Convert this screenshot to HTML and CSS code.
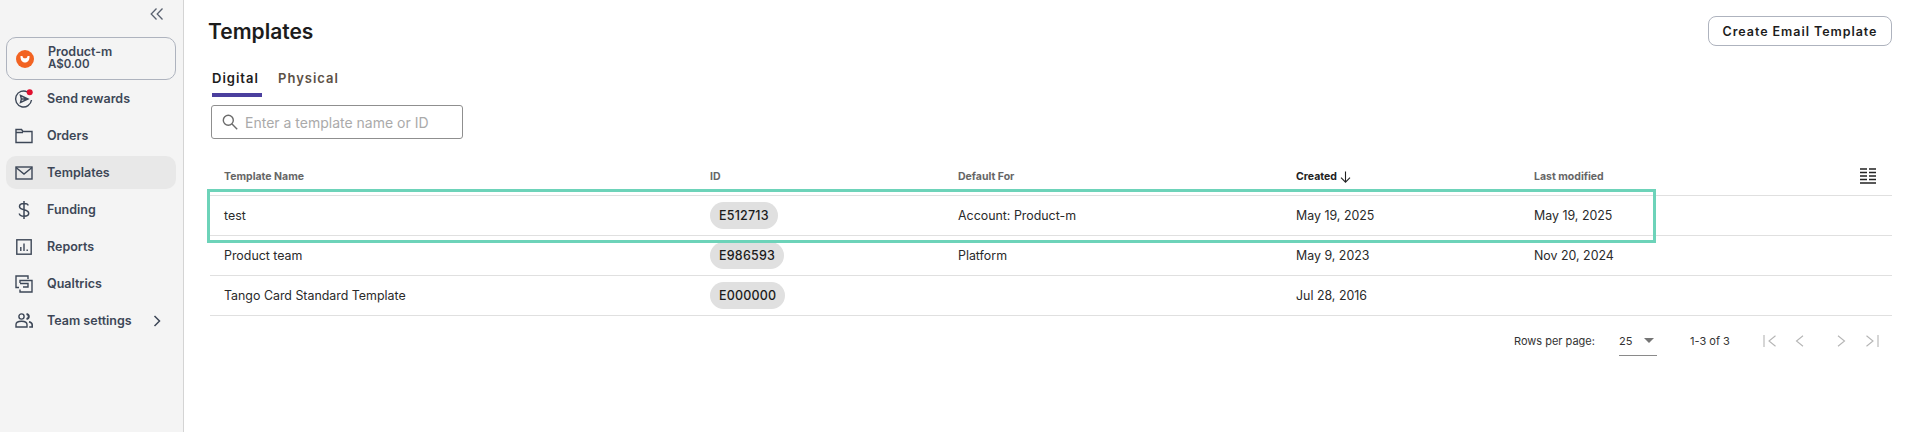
FILE: index.html
```html
<!DOCTYPE html>
<html lang="en">
<head>
<meta charset="utf-8">
<title>Templates</title>
<link rel="stylesheet" href="styles.css">
</head>
<body>
<div class="app">
  <aside class="sidebar">
    <div class="collapse">
      <svg width="14" height="14" viewBox="0 0 14 14" fill="none" stroke="#5a6270" stroke-width="1.3"><path d="M6.5 1.5 1.2 7l5.3 5.5M12.5 1.5 7.2 7l5.3 5.5"/></svg>
    </div>
    <div class="account">
      <svg class="account-logo" width="18" height="18" viewBox="0 0 18 18"><circle cx="9" cy="9" r="9" fill="#f26322"/><path d="M4.5 6h9c.3 3.6-1.6 6.6-4.5 6.6S4.200 9.600 4.500 6Z" fill="#fff"/><path d="M6.500 6h5c0 1.400-1 2.300-2.500 2.300S6.500 7.400 6.500 6Z" fill="#f26322"/></svg>
      <div class="account-text">
        <div>Product-m</div>
        <div class="account-balance">A$0.00</div>
      </div>
    </div>
    <nav class="nav">
      <a class="nav-item">
        <span class="nav-icon">
          <svg width="20" height="20" viewBox="0 0 20 20" fill="none" stroke="#3d4757" stroke-width="1.400"><path d="M13.500 3A8 8 0 1 0 17.500 11"/><path d="M6.500 6.500 14 10l-7.500 3.500.9-3.500-.9-3.500ZM7.400 10H14"/><circle cx="15.700" cy="3.300" r="3" fill="#e0102f" stroke="none"/></svg>
        </span>
        <span>Send rewards</span>
      </a>
      <a class="nav-item">
        <span class="nav-icon">
          <svg width="18" height="16" viewBox="0 0 18 16" fill="none" stroke="#3d4757" stroke-width="1.400"><path d="M1 14.500V1.500h5.500l1.500 2h9v11H1ZM1 4.500h7"/></svg>
        </span>
        <span>Orders</span>
      </a>
      <a class="nav-item nav-item-active">
        <span class="nav-icon">
          <svg width="18" height="14" viewBox="0 0 18 14" fill="none" stroke="#3d4757" stroke-width="1.400"><rect x="1" y="1" width="16" height="12"/><path d="m1 1.500 8 6.500 8-6.500"/></svg>
        </span>
        <span>Templates</span>
      </a>
      <a class="nav-item">
        <span class="nav-icon">
          <svg width="12" height="18" viewBox="0 0 12 18" fill="none" stroke="#3d4757" stroke-width="1.500"><path d="M10 4.500C10 3 8.500 2.500 6 2.500S1.500 3.500 1.500 5.500 3.500 8.200 6 8.800s4.700 1.300 4.700 3.500-2 3-4.700 3-4.500-1-4.700-2.800M6 0v18"/></svg>
        </span>
        <span>Funding</span>
      </a>
      <a class="nav-item">
        <span class="nav-icon">
          <svg width="16" height="16" viewBox="0 0 16 16" fill="none" stroke="#3d4757" stroke-width="1.400"><rect x=".8" y=".8" width="14.400" height="14.400"/><path d="M4.800 12V8M8 12V4.500M11.200 12v-1.500"/></svg>
        </span>
        <span>Reports</span>
      </a>
      <a class="nav-item">
        <span class="nav-icon">
          <svg width="18" height="18" viewBox="0 0 18 18" fill="none" stroke="#3d4757" stroke-width="1.400"><path d="M4 12.500H1V1h12v3M5 8V5.500h12V17H5v-2.500M5 8.500h8V12H8"/></svg>
        </span>
        <span>Qualtrics</span>
      </a>
      <a class="nav-item">
        <span class="nav-icon">
          <svg width="18" height="15" viewBox="0 0 18 15" fill="none" stroke="#3d4757" stroke-width="1.400"><circle cx="6.500" cy="3.500" r="2.600"/><path d="M1 14v-2.500c0-2 2.500-3.300 5.500-3.300s5.500 1.300 5.500 3.300V14H1Z"/><path d="M11.500 1c1.500.3 2.300 1.300 2.300 2.500S13 5.700 11.500 6" stroke-width="2"/><path d="M14 8.700c2 .5 3.200 1.500 3.200 3V14h-3" stroke-width="1.600"/></svg>
        </span>
        <span class="nav-label-grow">Team settings</span>
        <svg class="nav-chevron" width="8" height="12" viewBox="0 0 8 12" fill="none" stroke="#3d4757" stroke-width="1.500"><path d="m1.500 1 5 5-5 5"/></svg>
      </a>
    </nav>
  </aside>

  <main class="main">
    <header class="page-head">
      <h1 class="page-title">Templates</h1>
      <button class="create-btn">Create Email Template</button>
    </header>

    <div class="tabs">
      <div class="tab tab-active">Digital</div>
      <div class="tab">Physical</div>
    </div>

    <div class="search">
      <svg width="16" height="16" viewBox="0 0 16 16" fill="none" stroke="#6b6b6b" stroke-width="1.400"><circle cx="6.300" cy="6.300" r="5"/><path d="m10 10 5.200 5.200"/></svg>
      <span>Enter a template name or ID</span>
    </div>

    <div class="table">
      <div class="row row-head">
        <div class="cell">Template Name</div>
        <div class="cell">ID</div>
        <div class="cell">Default For</div>
        <div class="cell cell-sorted">Created
          <svg width="11" height="12" viewBox="0 0 11 12" fill="none" stroke="#222" stroke-width="1.100"><path d="M5.500 .5v10.500M1 6.700l4.500 4.500L10 6.700"/></svg>
        </div>
        <div class="cell">Last modified</div>
        <div class="cell cell-end">
          <svg width="16" height="16" viewBox="0 0 16 16" fill="none" stroke="#222" stroke-width="1.300"><path d="M0 1h7M9 1h7M0 4.500h7M9 4.500h7M0 8h7M9 8h7M0 11.500h7M9 11.500h7M0 15h16"/></svg>
        </div>
      </div>
      <div class="row">
        <div class="cell">test</div>
        <div class="cell"><span class="chip">E512713</span></div>
        <div class="cell">Account: Product-m</div>
        <div class="cell">May 19, 2025</div>
        <div class="cell">May 19, 2025</div>
        <div class="cell"></div>
      </div>
      <div class="row">
        <div class="cell">Product team</div>
        <div class="cell"><span class="chip">E986593</span></div>
        <div class="cell">Platform</div>
        <div class="cell">May 9, 2023</div>
        <div class="cell">Nov 20, 2024</div>
        <div class="cell"></div>
      </div>
      <div class="row">
        <div class="cell">Tango Card Standard Template</div>
        <div class="cell"><span class="chip">E000000</span></div>
        <div class="cell"></div>
        <div class="cell">Jul 28, 2016</div>
        <div class="cell"></div>
        <div class="cell"></div>
      </div>
      <div class="highlight"></div>
    </div>

    <div class="pager">
      <span class="pager-label">Rows per page:</span>
      <span class="pager-select">25
        <svg width="10" height="5" viewBox="0 0 10 5"><path d="M0 0h10L5 5Z" fill="#757575"/></svg>
      </span>
      <span class="pager-range">1-3 of 3</span>
      <span class="pager-btns">
        <svg width="14" height="12" viewBox="0 0 14 12" fill="none" stroke="#b5b5b5" stroke-width="1.100"><path d="M1 0v12M12.500 .8 6 6l6.500 5.200"/></svg>
        <svg class="pager-prev" width="14" height="12" viewBox="0 0 14 12" fill="none" stroke="#b5b5b5" stroke-width="1.100"><path d="M10 .8 3.500 6l6.500 5.200"/></svg>
        <svg class="pager-next" width="14" height="12" viewBox="0 0 14 12" fill="none" stroke="#b5b5b5" stroke-width="1.100"><path d="M4 .8 10.500 6 4 11.200"/></svg>
        <svg class="pager-last" width="14" height="12" viewBox="0 0 14 12" fill="none" stroke="#b5b5b5" stroke-width="1.100"><path d="M13 0v12M1.500 .8 8 6l-6.500 5.200"/></svg>
      </span>
    </div>
  </main>
</div>
</body>
</html>
```

FILE: styles.css
```css
* { box-sizing: border-box; }

html, body {
  margin: 0;
  padding: 0;
  height: 432px;
  overflow: hidden;
  background: #fff;
  font-family: "Inter", "Open Sans", sans-serif;
  color: #222;
}

.app {
  display: flex;
  height: 432px;
}

.sidebar {
  flex: 0 0 184px;
  background: #f4f4f4;
  border-right: 1px solid #d4d4d4;
  padding: 6px 7px 0 6px;
}

.collapse {
  display: flex;
  justify-content: flex-end;
  padding-right: 12px;
  height: 31px;
  padding-top: 1px;
}

.account {
  display: flex;
  align-items: center;
  height: 43px;
  border: 1px solid #aeb3be;
  border-radius: 10px;
  padding-left: 9px;
  gap: 14px;
}

.account-text {
  font-size: 12.500px;
  font-weight: 600;
  line-height: 13px;
  color: #3d4757;
  margin-top: -2px;
}

.account-balance {
  font-size: 11.500px;
}

.nav {
  display: flex;
  flex-direction: column;
}

.nav-item {
  display: flex;
  align-items: center;
  height: 37px;
  padding-left: 8px;
  border-radius: 10px;
  font-size: 12.500px;
  font-weight: 600;
  color: #3d4757;
}

.nav-item-active {
  background: #e8e8e8;
  height: 33px;
  margin: 2px 0;
}

.nav-icon {
  flex: 0 0 20px;
  width: 20px;
  display: flex;
  justify-content: center;
  align-items: center;
  margin-right: 13px;
}

.nav-label-grow {
  flex: 0 0 auto;
  width: 106px;
}

.main {
  flex: 1;
  min-width: 0;
  padding: 0 14px 0 24px;
}

.page-head {
  display: flex;
  justify-content: space-between;
  align-items: flex-start;
  padding-top: 16px;
  height: 60px;
}

.page-title {
  margin: 2px 0 0 0;
  font-size: 21px;
  line-height: 28px;
  font-weight: 600;
  color: #1c1c1c;
}

.create-btn {
  width: 184px;
  height: 30px;
  background: #fff;
  border: 1px solid #aeb3be;
  border-radius: 8px;
  font-family: inherit;
  font-size: 12.500px;
  font-weight: 600;
  letter-spacing: .95px;
  color: #1c1c1c;
  padding: 0;
}

.tabs {
  display: flex;
  gap: 16px;
  padding-left: 4px;
  height: 37px;
}

.tab {
  height: 37px;
  padding-top: 10px;
  font-size: 13px;
  line-height: 16px;
  font-weight: 600;
  letter-spacing: 1px;
  color: #5d5146;
}

.tab-active {
  color: #1c1c1c;
  border-bottom: 4px solid #4b3f9e;
  width: 50px;
  white-space: nowrap;
}

.search {
  display: flex;
  align-items: center;
  gap: 7px;
  width: 252px;
  height: 34px;
  margin: 8px 0 0 3px;
  padding-left: 10px;
  border: 1px solid #8f8f8f;
  border-radius: 3px;
  font-size: 14px;
  color: #aaa;
}

.table {
  position: relative;
  margin: 19px 0 0 2px;
}

.row {
  display: grid;
  grid-template-columns: 500px 248px 338px 238px 238px 1fr;
  align-items: center;
  height: 40px;
  border-bottom: 1px solid #e0e0e0;
  font-size: 12.400px;
  font-weight: 400;
  color: #2a2a2a;
}

.row-head {
  height: 38px;
  font-size: 10.500px;
  font-weight: 700;
  color: #666;
}

.cell {
  white-space: nowrap;
}

.cell:first-child {
  padding-left: 14px;
}

.cell-sorted {
  display: flex;
  align-items: center;
  gap: 3px;
  color: #222;
}

.cell-end {
  display: flex;
  justify-content: flex-end;
  padding-right: 16px;
  margin-top: -2px;
}

.chip {
  display: inline-flex;
  align-items: center;
  height: 27px;
  padding: 0 9px;
  border-radius: 14px;
  background: #e0e0e0;
  font-size: 12.500px;
  font-weight: 500;
  letter-spacing: .2px;
  color: #1c1c1c;
}

.highlight {
  position: absolute;
  left: -3px;
  top: 31px;
  width: 1449px;
  height: 54px;
  border: 3px solid #6dd3b9;
  pointer-events: none;
}

.pager {
  display: flex;
  align-items: center;
  height: 50px;
  padding-left: 1306px;
  font-size: 11px;
  color: #333;
}

.pager-label {
  width: 105px;
}

.pager-select {
  display: flex;
  align-items: center;
  justify-content: space-between;
  width: 38px;
  height: 30px;
  padding: 0 3px 0 0;
  border-bottom: 1px solid #8a8a8a;
}

.pager-range {
  width: 73px;
  padding-left: 33px;
  white-space: nowrap;
}

.pager-btns {
  display: flex;
  margin-left: 33px;
}

.pager-prev { margin-left: 15.500px; }
.pager-next { margin-left: 27.500px; }
.pager-last { margin-left: 17px; }
```
